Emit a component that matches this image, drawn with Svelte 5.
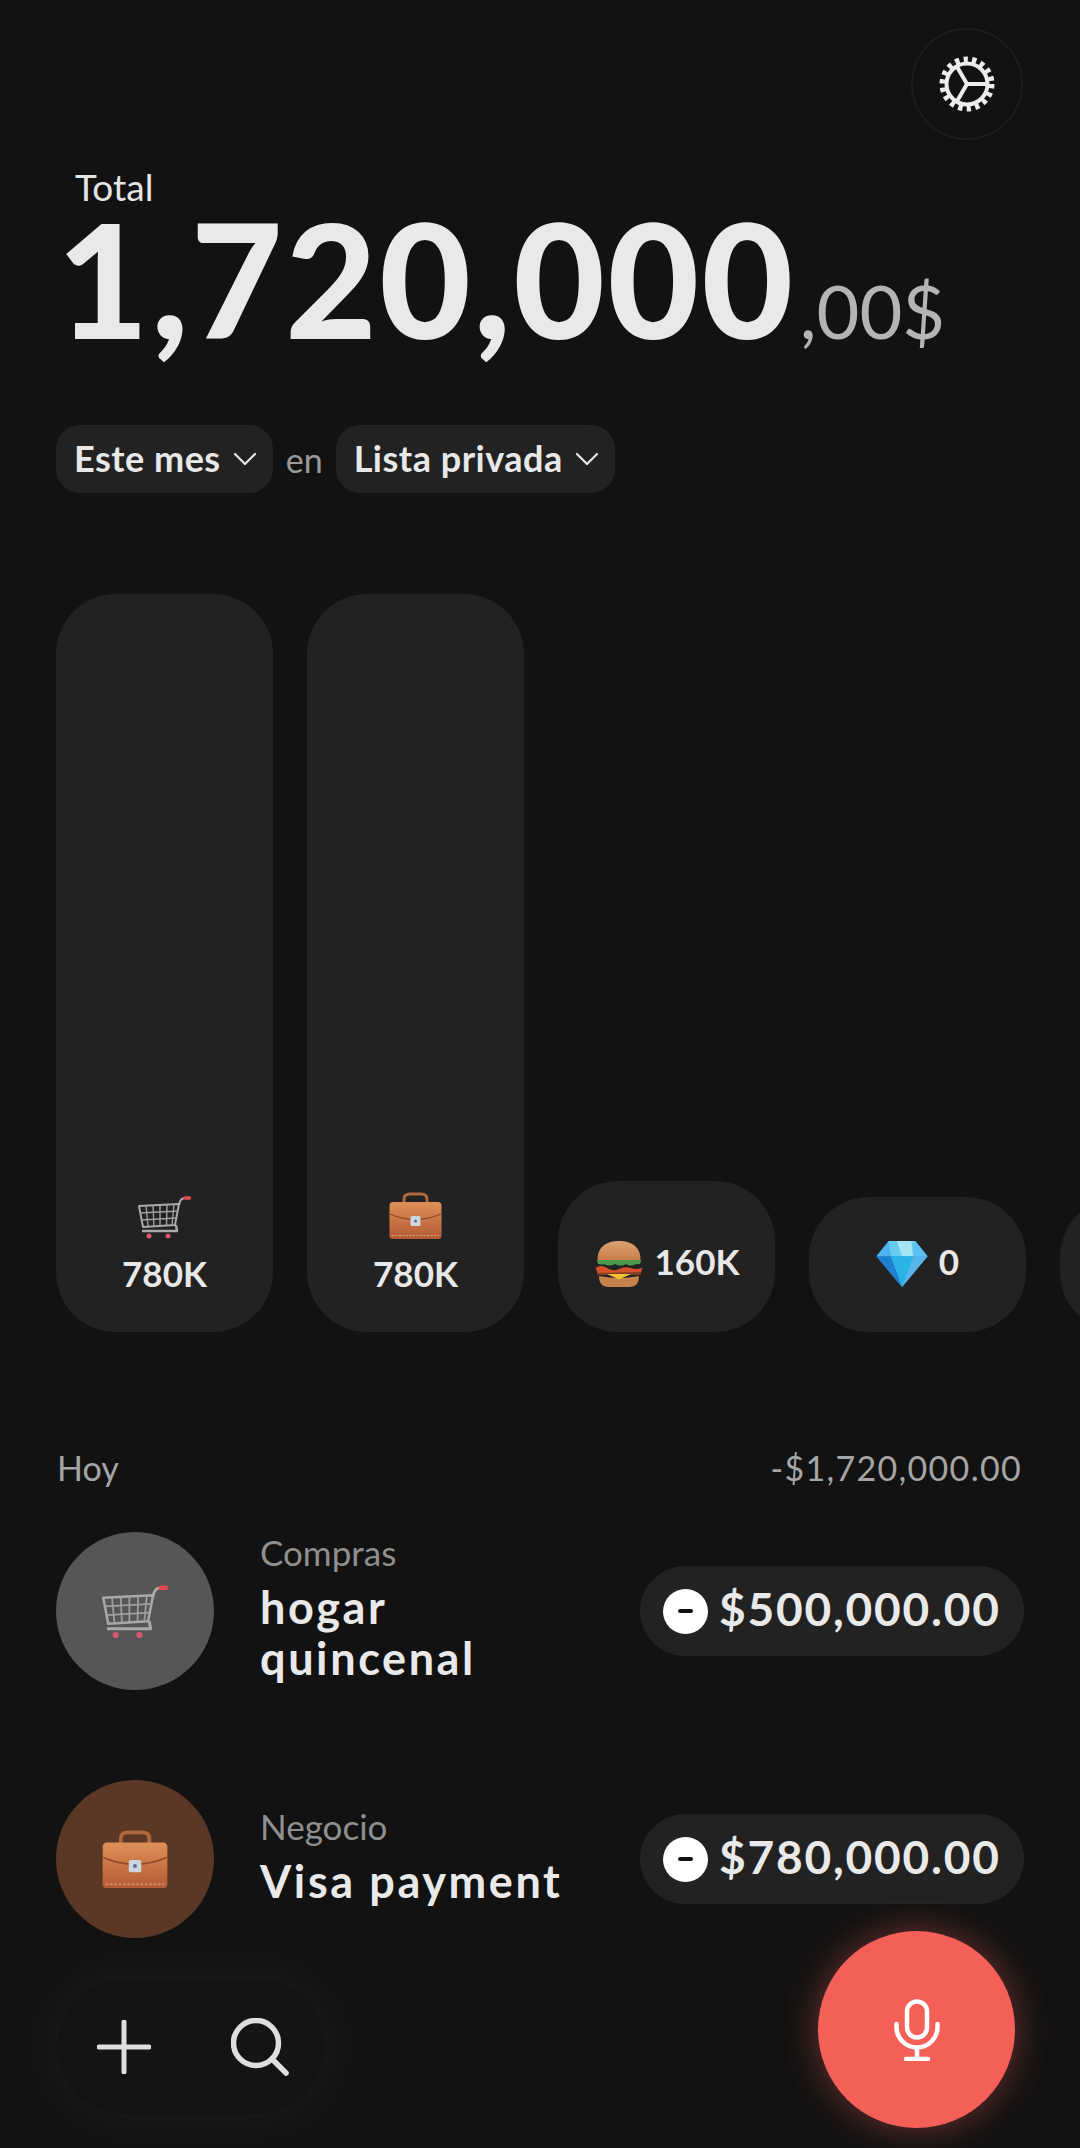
<script>
  const bars = [
    { id: 'cart', v: '780K', tall: true },
    { id: 'case', v: '780K', tall: true },
    { id: 'burger', v: '160K', h: 151 },
    { id: 'gem', v: '0', h: 135 },
    { id: '', v: '', h: 135 }
  ];
  const rows = [
    { id: 'cart', cls: 'grey', cat: 'Compras', title: 'hogar quincenal', amt: '$500,000.00' },
    { id: 'case', cls: 'brown', cat: 'Negocio', title: 'Visa payment', amt: '$780,000.00' }
  ];
</script>

{#snippet emoji(id)}
  {#if id === 'cart'}
    <svg class="em cart" viewBox="0 0 53 44" fill="none">
      <path d="M1 11 L41 9 L37 30 L5 32 Z" stroke="#a9a9a9" stroke-width="2" stroke-linejoin="round"/>
      <path d="M2 18 L40 16 M3 25 L38 23 M8 11 L10 31 M15 10.500 L16 31 M22 10 L22 31 M29 10 L28.500 30.500 M36 9.500 L34 30" stroke="#a0a0a0" stroke-width="1.400"/>
      <path d="M41 10 Q42 3 47 3" stroke="#b0b0b0" stroke-width="2"/>
      <path d="M47 3 H51.500" stroke="#e5484d" stroke-width="3.500" stroke-linecap="round"/>
      <path d="M38 30 L39 36 H4" stroke="#a9a9a9" stroke-width="2.400" stroke-linejoin="round"/>
      <circle cx="11" cy="41" r="2.500" fill="#d9566c"/>
      <circle cx="30" cy="41" r="2.500" fill="#d9566c"/>
    </svg>
  {:else if id === 'case'}
    <svg class="em case" viewBox="0 0 53 47" fill="none">
      <defs>
        <linearGradient id="cs" x1="0" y1="0" x2="0" y2="1">
          <stop offset="0" stop-color="#df9058"/>
          <stop offset="1" stop-color="#b35a33"/>
        </linearGradient>
      </defs>
      <path d="M15 11 V7 Q15 2 21 2 H32 Q38 2 38 7 V11" stroke="#b0683a" stroke-width="3"/>
      <rect x="0.500" y="10" width="52" height="37" rx="3.500" fill="url(#cs)"/>
      <path d="M1 22 Q26 33 52 22" stroke="#8f4a27" stroke-width="1.300"/>
      <path d="M3 43.500 H50" stroke="#e6b088" stroke-width="0.800" stroke-dasharray="2 1.500"/>
      <rect x="21.500" y="24" width="10" height="10" rx="1.500" fill="#cfd5dc"/>
      <circle cx="26.500" cy="29" r="1.600" fill="#4f7597"/>
    </svg>
  {:else if id === 'burger'}
    <svg class="em burger" viewBox="0 0 48 47" fill="none">
      <defs>
        <linearGradient id="bn" x1="0" y1="0" x2="0" y2="1">
          <stop offset="0" stop-color="#dba272"/>
          <stop offset="1" stop-color="#c5773f"/>
        </linearGradient>
      </defs>
      <path d="M3 24 C0 6 13 1 24 1 C35 1 48 6 45 24 Z" fill="url(#bn)"/>
      <path d="M2 28 Q24 36 46 28 L46 35 L2 35 Z" fill="#7d3f22"/>
      <path d="M0.500 28 Q6 24 12 28 T24 29 T36 28 T47.500 28 L46 32 L3 33 Z" fill="#d8502a"/>
      <path d="M2 20 H46 Q46 25 41 24 Q36 27 31 24 Q26 27 20 24 Q14 27 9 24 Q3 26 2 20 Z" fill="#4c9a4e"/>
      <path d="M4 36 Q4 47 14 47 H34 Q44 47 44 36 Q24 40 4 36 Z" fill="#c9814c"/>
      <path d="M12 34 H36 L24 39.500 Z" fill="#f6c233"/>
    </svg>
  {:else if id === 'gem'}
    <svg class="em gem" viewBox="0 0 50 45">
      <path d="M12 0 H38 L50 15 L25 45 L0 15 Z" fill="#2f9fe6"/>
      <path d="M12 0 L0 15 H14 Z" fill="#4cb2f0"/>
      <path d="M38 0 L50 15 H36 Z" fill="#5cc0f2"/>
      <path d="M12 0 L14 15 H36 L38 0 Z" fill="#67cbee"/>
      <path d="M20 0 H34 L36 15 H25 Z" fill="#a5e4f5"/>
      <path d="M14 15 H36 L25 45 Z" fill="#29b3e6"/>
      <path d="M0 15 H14 L25 45 Z" fill="#1f7fd0"/>
      <path d="M50 15 H36 L25 45 Z" fill="#58b7ea"/>
    </svg>
  {/if}
{/snippet}

<div class="page">
  <header class="top">
    <button class="gear" aria-label="Ajustes">
      <svg viewBox="0 0 56 56" width="56" height="56" fill="none" stroke="#ececec">
        <circle cx="28" cy="28" r="20.500" stroke-width="4"/>
        <circle cx="28" cy="28" r="24.500" stroke-width="6" stroke-dasharray="4.280 4.280"/>
        <path d="M28 28 H48 M28 28 L18 10.700 M28 28 L18 45.300" stroke-width="4"/>
      </svg>
    </button>
  </header>

  <section class="total">
    <div class="total-label">Total</div>
    <div class="total-value"><span class="big">1,720,000</span><span class="cents">,00$</span></div>
  </section>

  <div class="filters">
    <button class="pill">Este mes
      <svg viewBox="0 0 24 14" width="24" height="14" fill="none" stroke="#e8e8e8" stroke-width="2.200" stroke-linecap="round" stroke-linejoin="round"><path d="M2 2 L12 12 L22 2"/></svg>
    </button>
    <span class="en">en</span>
    <button class="pill">Lista privada
      <svg viewBox="0 0 24 14" width="24" height="14" fill="none" stroke="#e8e8e8" stroke-width="2.200" stroke-linecap="round" stroke-linejoin="round"><path d="M2 2 L12 12 L22 2"/></svg>
    </button>
  </div>

  <div class="bars">
    {#each bars as b}
      {#if b.tall}
        <div class="bar tall">
          {@render emoji(b.id)}
          <span class="val">{b.v}</span>
        </div>
      {:else}
        <div class="bar short" style="height:{b.h}px">
          {@render emoji(b.id)}
          <span class="val">{b.v}</span>
        </div>
      {/if}
    {/each}
  </div>

  <div class="day">
    <span>Hoy</span>
    <span class="sum">-$1,720,000.00</span>
  </div>

  <div class="rows">
    {#each rows as r}
      <div class="row">
        <div class="avatar {r.cls}">{@render emoji(r.id)}</div>
        <div class="info">
          <div class="cat">{r.cat}</div>
          <div class="title">{r.title}</div>
        </div>
        <div class="amount">
          <span class="minus"><i></i></span>
          <span class="amt">{r.amt}</span>
        </div>
      </div>
    {/each}
  </div>

  <div class="dock">
    <div class="tools">
      <svg viewBox="0 0 54 54" width="54" height="54" fill="none" stroke="#dedede" stroke-width="5" stroke-linecap="round"><path d="M27 2 V52 M2 27 H52"/></svg>
      <svg viewBox="0 0 58 58" width="58" height="58" fill="none" stroke="#dedede" stroke-width="5.500" stroke-linecap="round"><circle cx="25" cy="25" r="22.500"/><path d="M41 41 L55 55"/></svg>
    </div>
    <button class="mic" aria-label="Micrófono">
      <svg viewBox="0 0 46 62" width="46" height="62" fill="none" stroke="#fff" stroke-width="4.500" stroke-linecap="round"><rect x="13" y="2.500" width="20" height="36" rx="10"/><path d="M2.500 25 V28 A20.500 20.500 0 0 0 43.500 28 V25"/><path d="M23 49 V60 M12 60 H34"/></svg>
    </button>
  </div>
</div>

<style>
  :global(body) { margin: 0; background: #121212; }
  .page {
    position: relative;
    width: 1080px;
    height: 2148px;
    overflow: hidden;
    background: #121212;
    color: #e9e9e9;
    font-family: "Lato", "Noto Sans", sans-serif;
  }
  button { font: inherit; color: inherit; border: 0; padding: 0; }
  .top { display: flex; justify-content: flex-end; padding: 28px 57px 0 0; }
  .gear {
    width: 112px; height: 112px; border-radius: 50%;
    background: transparent; border: 2px solid #1d1d1d;
    display: flex; align-items: center; justify-content: center;
    box-sizing: border-box;
  }
  .total { padding-left: 57px; margin-top: 24px; }
  .total-label { font-size: 37px; line-height: 46px; padding-left: 18px; color: #e4e4e4; }
  .total-value { display: flex; align-items: baseline; margin-top: 8px; height: 122px; white-space: nowrap; }
  .big { font-size: 158px; line-height: 120px; font-weight: 900; color: #e9e9e9; letter-spacing: 2.500px; }
  .cents { font-size: 74px; line-height: 84px; font-weight: 400; color: #b4b4b4; margin-left: 4px; }
  .filters { display: flex; align-items: center; margin: 85px 0 0 56px; gap: 13px; }
  .pill {
    height: 68px; border-radius: 24px; background: #222; box-sizing: border-box;
    display: flex; align-items: center; gap: 12px; padding: 0 16px 2px 18px;
    font-size: 36px; font-weight: 700; color: #e8e8e8; letter-spacing: 0.500px;
  }
  .pill svg { margin-top: 2px; }
  .en { font-size: 34px; color: #9a9a9a; }
  .bars { display: flex; align-items: flex-end; gap: 34px; margin: 101px 0 0 56px; height: 738px; }
  .bar { flex: 0 0 217px; background: #222; box-sizing: border-box; display: flex; align-items: center; justify-content: center; }
  .tall { height: 738px; border-radius: 60px; flex-direction: column; justify-content: flex-end; padding-bottom: 39px; gap: 14px; }
  .short { border-radius: 60px; gap: 11px; align-items: flex-end; padding-bottom: 45px; }
  .val { font-size: 35px; line-height: 40px; font-weight: 700; color: #e8e8e8; }
  .short .val { line-height: 44px; margin-bottom: 4px; }
  .em { display: block; flex: none; }
  .cart { width: 53px; height: 44px; }
  .case { width: 53px; height: 47px; }
  .burger { width: 50px; height: 47px; }
  .gem { width: 52px; height: 46px; }
  .avatar .cart, .avatar .case { width: 66px; height: auto; }
  .day {
    display: flex; justify-content: space-between; align-items: center; box-sizing: border-box;
    margin: 113px 58px 0 57px; height: 48px; padding-bottom: 3px;
    font-size: 34px; color: #a5a5a5;
  }
  .sum { letter-spacing: 1.300px; }
  .rows { display: flex; flex-direction: column; gap: 90px; margin: 39px 56px 0 56px; }
  .row { display: flex; align-items: center; height: 158px; }
  .avatar { width: 158px; height: 158px; border-radius: 50%; display: flex; align-items: center; justify-content: center; flex: none; }
  .grey { background: #565656; }
  .brown { background: #5b3826; }
  .info { flex: 1; margin-left: 46px; padding-bottom: 7px; }
  .cat { font-size: 35px; line-height: 42px; margin-bottom: 9px; color: #8f8f8f; }
  .title { font-size: 45px; line-height: 51px; font-weight: 700; letter-spacing: 2.600px; color: #e9e9e9; max-width: 320px; }
  .amount {
    flex: none; width: 384px; box-sizing: border-box; height: 90px; border-radius: 45px; background: #222;
    display: flex; align-items: center; gap: 11px; padding-left: 23px;
    font-size: 46px; font-weight: 700; color: #e9e9e9; letter-spacing: 1.800px;
  }
  .amt { padding-bottom: 5px; }
  .minus { width: 45px; height: 45px; border-radius: 50%; background: #fff; display: flex; align-items: center; justify-content: center; }
  .minus i { display: block; width: 15px; height: 4px; border-radius: 2px; background: #121212; }
  .dock {
    position: absolute; left: 0; right: 0; bottom: 0; height: 240px;
    pointer-events: none;
  }
  .tools {
    position: absolute; left: 57px; top: 71px; width: 268px; height: 135px; box-sizing: border-box;
    border-radius: 68px; background: #141414;
    box-shadow: 0 0 50px 12px rgba(255, 255, 255, 0.04);
    display: flex; align-items: center; gap: 80px; padding-left: 40px;
  }
  .mic {
    position: absolute; left: 818px; top: 23px; width: 197px; height: 197px; border-radius: 50%;
    background: #f45f58; box-shadow: 0 0 36px rgba(244, 95, 88, 0.42);
    display: flex; align-items: center; justify-content: center;
  }
</style>
